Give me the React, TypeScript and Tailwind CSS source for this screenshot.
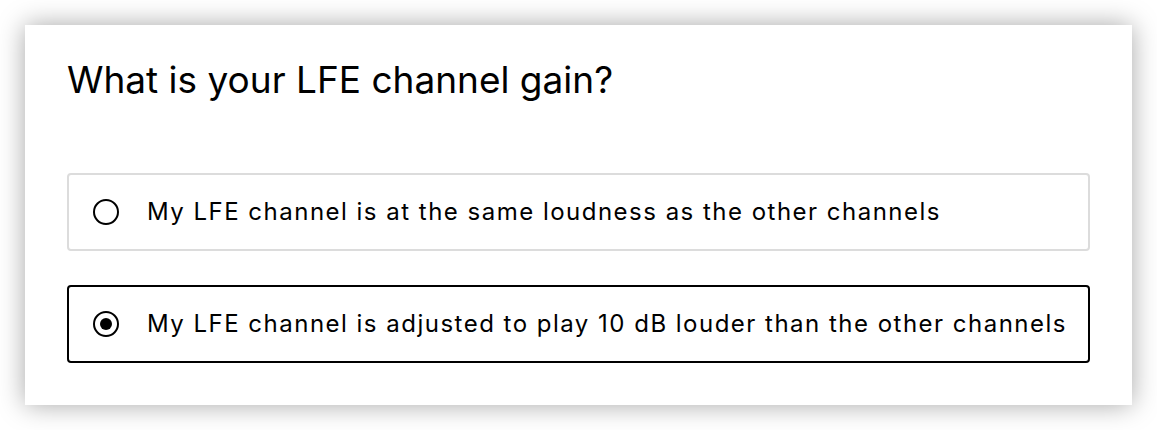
import React from "react";

function Radio({ checked }: { checked: boolean }) {
  return (
    <span className="flex h-[26px] w-[26px] shrink-0 items-center justify-center rounded-full border-2 border-black">
      {checked && <span className="h-[12px] w-[12px] rounded-full bg-black" />}
    </span>
  );
}

function Option({ label, checked }: { label: string; checked: boolean }) {
  return (
    <div
      className={
        "flex h-[78px] items-center rounded-[4px] border-2 pl-[24px] " +
        (checked ? "border-black" : "border-[#dcdcdc]")
      }
    >
      <Radio checked={checked} />
      <span className="ml-[28px] text-[24px] leading-[30px] tracking-[0.062em] text-black">{label}</span>
    </div>
  );
}

export default function App() {
  return (
    <div className="min-h-[430px] w-[1157px] bg-white pl-[25px] pt-[25px]" style={{ fontFamily: "Inter, 'Noto Sans', sans-serif" }}>
      <div className="h-[380px] w-[1107px] bg-white px-[42px] pt-[33px] shadow-[0_0_25px_rgba(0,0,0,0.35)]">
        <h1 className="text-[37px] font-normal leading-[44px] text-black">What is your LFE channel gain?</h1>
        <div className="mt-[71px] flex flex-col gap-[34px]">
          <Option checked={false} label="My LFE channel is at the same loudness as the other channels" />
          <Option checked={true} label="My LFE channel is adjusted to play 10 dB louder than the other channels" />
        </div>
      </div>
    </div>
  );
}
